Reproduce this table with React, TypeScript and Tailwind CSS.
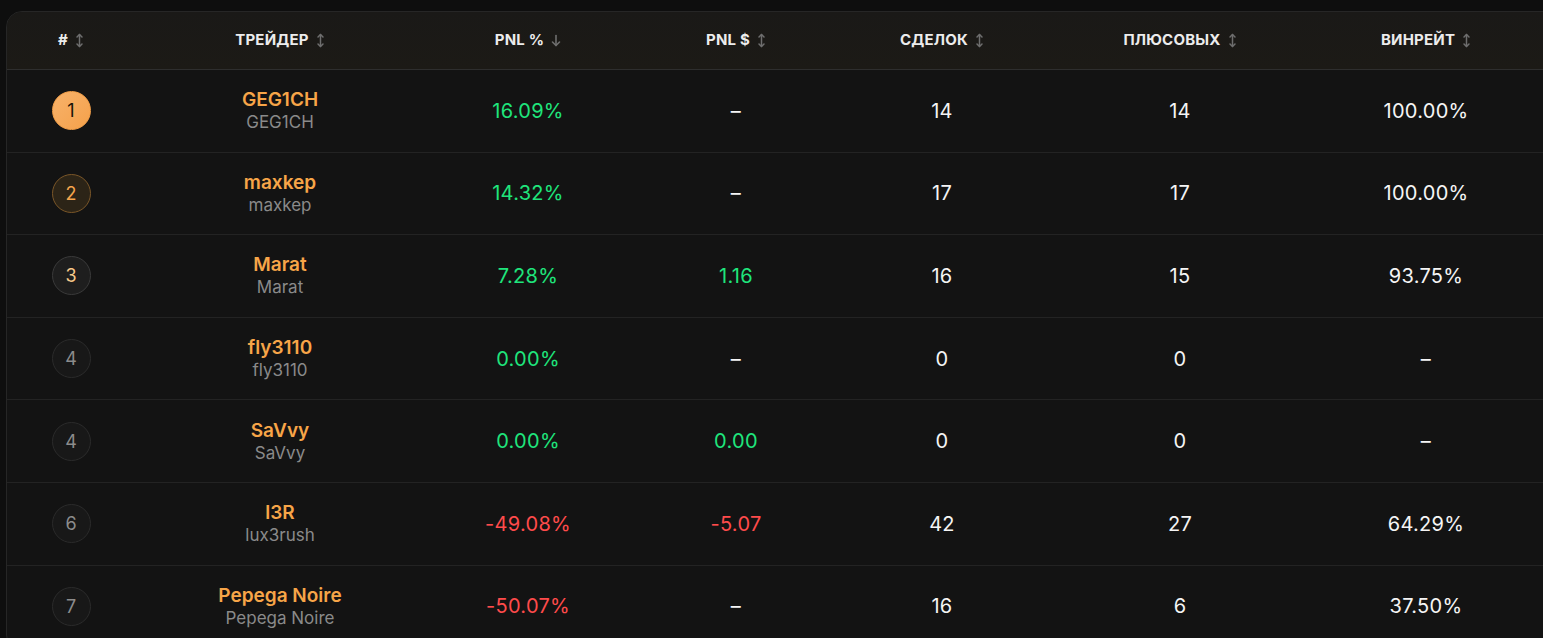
import React from "react";

type Row = {
  rank: number;
  name: string;
  sub: string;
  pnlp: string;
  pnlpTone: "g" | "r";
  pnl: string;
  pnlTone: "g" | "r" | "w";
  deals: string;
  plus: string;
  win: string;
};

const rows: Row[] = [
  { rank: 1, name: "GEG1CH", sub: "GEG1CH", pnlp: "16.09%", pnlpTone: "g", pnl: "–", pnlTone: "w", deals: "14", plus: "14", win: "100.00%" },
  { rank: 2, name: "maxkep", sub: "maxkep", pnlp: "14.32%", pnlpTone: "g", pnl: "–", pnlTone: "w", deals: "17", plus: "17", win: "100.00%" },
  { rank: 3, name: "Marat", sub: "Marat", pnlp: "7.28%", pnlpTone: "g", pnl: "1.16", pnlTone: "g", deals: "16", plus: "15", win: "93.75%" },
  { rank: 4, name: "fly3110", sub: "fly3110", pnlp: "0.00%", pnlpTone: "g", pnl: "–", pnlTone: "w", deals: "0", plus: "0", win: "–" },
  { rank: 4, name: "SaVvy", sub: "SaVvy", pnlp: "0.00%", pnlpTone: "g", pnl: "0.00", pnlTone: "g", deals: "0", plus: "0", win: "–" },
  { rank: 6, name: "l3R", sub: "lux3rush", pnlp: "-49.08%", pnlpTone: "r", pnl: "-5.07", pnlTone: "r", deals: "42", plus: "27", win: "64.29%" },
  { rank: 7, name: "Pepega Noire", sub: "Pepega Noire", pnlp: "-50.07%", pnlpTone: "r", pnl: "–", pnlTone: "w", deals: "16", plus: "6", win: "37.50%" },
];

const grid = "grid grid-cols-[128px_290px_206px_210px_202px_274px_218px_1fr]";

function SortIcon() {
  return (
    <svg width="9" height="15" viewBox="0 0 9 15" className="text-[#6e6e6e]" fill="none" stroke="currentColor" strokeWidth="1.5" strokeLinecap="round" strokeLinejoin="round">
      <path d="M4.5 1.5v12" />
      <path d="M2 4L4.5 1.5 7 4" />
      <path d="M2 11L4.5 13.5 7 11" />
    </svg>
  );
}

function DownIcon() {
  return (
    <svg width="10" height="13" viewBox="0 0 10 13" className="text-[#6e6e6e]" fill="none" stroke="currentColor" strokeWidth="1.6" strokeLinecap="round" strokeLinejoin="round">
      <path d="M5 1.5v10" />
      <path d="M1.5 8L5 11.5 8.5 8" />
    </svg>
  );
}

function Head({ label, down }: { label: string; down?: boolean }) {
  return (
    <div className="flex items-center justify-center gap-[7px]">
      <span className="text-[15px] font-bold tracking-[0.2px] text-[#ececec]">{label}</span>
      {down ? <DownIcon /> : <SortIcon />}
    </div>
  );
}

function Rank({ n, i }: { n: number; i: number }) {
  let cls = "bg-[#181818] border border-[#2b2b2b] text-[#8c8c8c]";
  if (i === 0) cls = "bg-gradient-to-br from-[#f7b26a] to-[#f5a14a] text-[#1a1208] border border-[#f5a14a]";
  else if (i === 1) cls = "bg-[#2c2417] border border-[#7a5628] text-[#f5a54d]";
  else if (i === 2) cls = "bg-[#1e1e1e] border border-[#3a3a3a] text-[#f7c98a]";
  return (
    <div className={`w-[39px] h-[39px] rounded-full flex items-center justify-center text-[18px] font-normal ${cls}`}>
      {n}
    </div>
  );
}

const tone = (t: "g" | "r" | "w") =>
  t === "g" ? "text-[#1fe57c]" : t === "r" ? "text-[#ff4b4b]" : "text-[#f5f5f5]";

export default function App() {
  return (
    <div
      className="w-[1543px] h-[638px] overflow-hidden bg-[#0e0e0e] pt-[11px] pl-[6px]"
      style={{ fontFamily: "Inter, 'Noto Sans', sans-serif" }}
    >
      <div className="w-[1560px] h-[640px] rounded-[16px] border border-[#262626] bg-[#131313] overflow-hidden">
        <div className={`${grid} h-[58px] items-center bg-gradient-to-b from-[#1a1917] to-[#1c1a16] border-b border-[#2e2e2e]`}>
          <Head label="#" />
          <Head label="ТРЕЙДЕР" />
          <Head label="PNL %" down />
          <Head label="PNL $" />
          <Head label="СДЕЛОК" />
          <Head label="ПЛЮСОВЫХ" />
          <Head label="ВИНРЕЙТ" />
          <div />
        </div>
        {rows.map((r, i) => (
          <div key={i} className={`${grid} h-[82.6px] items-center border-b border-[#232323]`}>
            <div className="flex justify-center">
              <Rank n={r.rank} i={i} />
            </div>
            <div className="flex flex-col items-center leading-none">
              <span className="text-[19px] font-semibold text-[#f7a548]">{r.name}</span>
              <span className="mt-[5px] text-[17px] text-[#8a8a8a]">{r.sub}</span>
            </div>
            <div className={`text-center text-[20px] tracking-[0.3px] ${tone(r.pnlpTone)}`}>{r.pnlp}</div>
            <div className={`text-center text-[20px] tracking-[0.3px] ${tone(r.pnlTone)}`}>{r.pnl}</div>
            <div className="text-center text-[20px] tracking-[0.3px] text-[#f5f5f5]">{r.deals}</div>
            <div className="text-center text-[20px] tracking-[0.3px] text-[#f5f5f5]">{r.plus}</div>
            <div className="text-center text-[20px] tracking-[0.3px] text-[#f5f5f5]">{r.win}</div>
            <div />
          </div>
        ))}
      </div>
    </div>
  );
}
